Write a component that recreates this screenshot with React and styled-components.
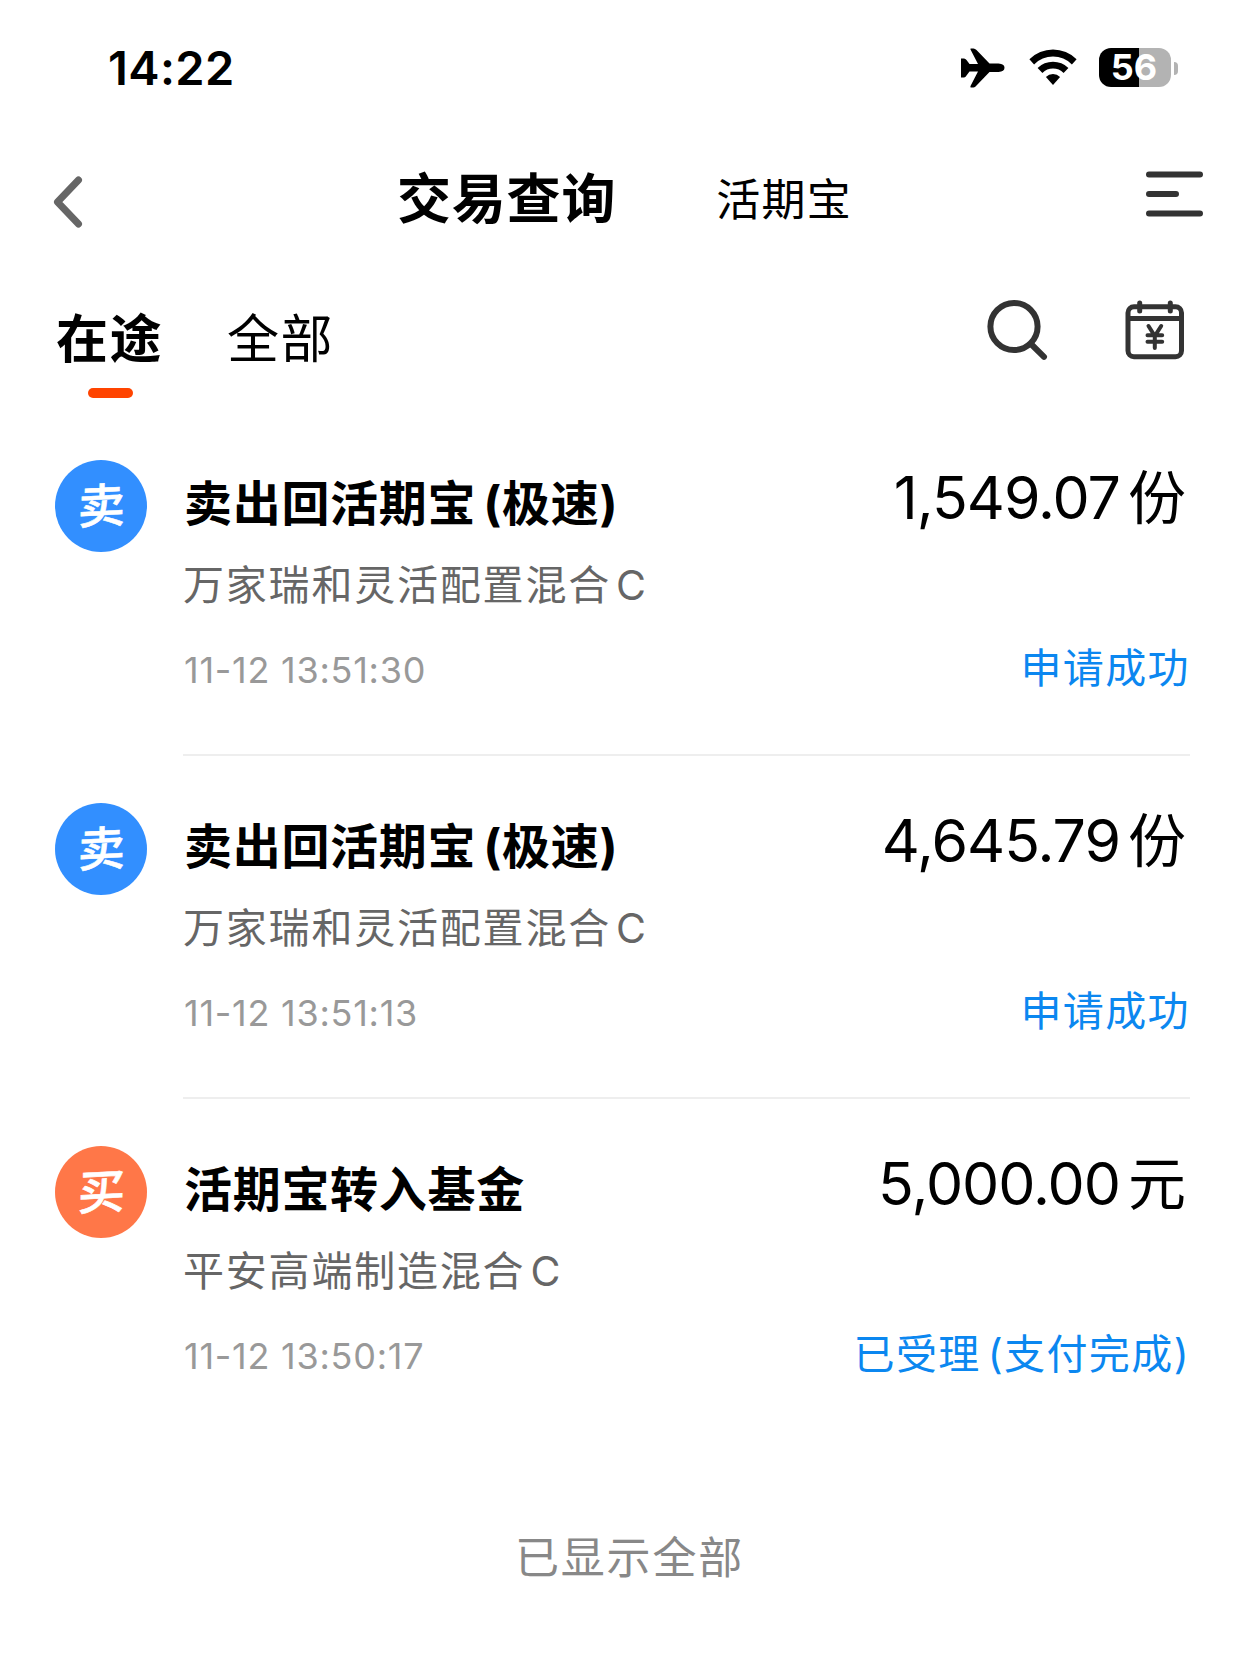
import styled, { createGlobalStyle } from "styled-components";

const GlobalStyle = createGlobalStyle`
  * {
    box-sizing: border-box;
  }
  body {
    margin: 0;
    background: #fff;
    color: #000;
    font-family: Inter, "Noto Sans CJK SC", sans-serif;
  }
`;

const Page = styled.div`
  width: 1242px;
  height: 1658px;
  background: #fff;
  overflow: hidden;
  white-space: nowrap;
`;

const StatusBar = styled.div`
  height: 136px;
  padding: 0 64px 0 108px;
  display: flex;
  align-items: center;
  justify-content: space-between;
`;

const Clock = styled.span`
  font-size: 47px;
  font-weight: 600;
  letter-spacing: 0.4px;
  line-height: 60px;
`;

const StatusIcons = styled.div`
  display: flex;
  align-items: center;
`;

const WifiIcon = styled.svg`
  margin: -2px 0 0 24px;
`;

const Battery = styled.div`
  width: 72px;
  height: 39px;
  margin: -1px 0 0 22px;
  padding-right: 2px;
  border-radius: 12px;
  background: linear-gradient(to right, #000 40px, #b3b3b3 40px);
  color: #fff;
  font-size: 36px;
  font-weight: 700;
  line-height: 39px;
  text-align: center;
`;

const BatteryTip = styled.div`
  width: 4px;
  height: 13px;
  margin-left: 3px;
  border-radius: 0 4px 4px 0;
  background: #b3b3b3;
`;

const Header = styled.header`
  height: 123px;
  padding: 0 38px 0 53px;
  display: flex;
  align-items: center;
`;

const BackIcon = styled.svg`
  margin-top: 9px;
`;

const Title = styled.h1`
  margin: 4px 0 0 314px;
  font-size: 54px;
  font-weight: 700;
  letter-spacing: 0.8px;
  line-height: 70px;
`;

const SubTitle = styled.span`
  margin: 4px 0 0 100px;
  font-size: 44px;
  letter-spacing: 1.3px;
  line-height: 70px;
`;

const MenuIcon = styled.svg`
  margin: -8px 0 0 auto;
`;

const Toolbar = styled.div`
  height: 154px;
  padding: 0 57px 0 56px;
  display: flex;
  align-items: flex-start;
`;

const Tab = styled.div`
  width: 107px;
  margin-right: 64px;
  padding-top: 46px;
  display: flex;
  flex-direction: column;
  font-size: 52px;
  font-weight: ${(p) => (p.$active ? 700 : 400)};
  letter-spacing: 1.4px;
  line-height: 70px;
  &::after {
    content: "";
    width: 45px;
    height: 10px;
    margin: 13px 0 0 32px;
    border-radius: 5px;
    background: ${(p) => (p.$active ? "#ff4400" : "transparent")};
  }
`;

const Tools = styled.div`
  margin: 39px 0 0 auto;
  display: flex;
  gap: 77px;
`;

const Row = styled.div`
  height: 343px;
  padding: 0 52px 0 55px;
  display: flex;
`;

const Badge = styled.div`
  width: 92px;
  height: 92px;
  margin: 47px 36px 0 0;
  border-radius: 50%;
  background: ${(p) => (p.$buy ? "#ff7748" : "#328fff")};
  color: #fff;
  font-size: 47px;
  font-weight: 500;
  line-height: 92px;
  text-align: center;
`;

const Glyph = styled.span`
  display: inline-block;
  transform: rotate(-3deg) skewX(-4deg);
  -webkit-text-stroke: 0.6px #fff;
`;

const Content = styled.div`
  flex: 1;
  display: flex;
  justify-content: space-between;
  border-bottom: 2px solid ${(p) => (p.$last ? "transparent" : "#eeeeee")};
`;

const Left = styled.div`
  padding-top: 61px;
`;

const Right = styled.div`
  padding-top: 50px;
  text-align: right;
`;

const Name = styled.div`
  padding-left: 1px;
  font-size: 48px;
  font-weight: 700;
  letter-spacing: 0.7px;
  line-height: 60px;
`;

const Fund = styled.div`
  margin-top: 21px;
  color: #666;
  font-size: 41px;
  letter-spacing: 1.8px;
  line-height: 60px;
`;

const Time = styled.div`
  margin-top: 30px;
  padding-left: 1px;
  color: #999;
  font-size: 36px;
  letter-spacing: 0.75px;
  line-height: 50px;
`;

const Amount = styled.div`
  padding-right: 5px;
  font-size: 59px;
  letter-spacing: -1px;
  line-height: 70px;
`;

const Unit = styled.span`
  margin-left: 8px;
  font-size: 58px;
`;

const Status = styled.div`
  margin-top: 105px;
  color: #0b87f0;
  font-size: 41px;
  letter-spacing: 1.4px;
  line-height: 60px;
`;

const Gap = styled.span`
  margin-left: ${(p) => p.$size || 7}px;
`;

const Footer = styled.div`
  padding: 81px 0 0 17px;
  color: #888;
  font-size: 44px;
  letter-spacing: 1.8px;
  line-height: 70px;
  text-align: center;
`;

const records = [
  { type: "卖", name: "卖出回活期宝", note: "(极速)", fund: "万家瑞和灵活配置混合", time: "11-12 13:51:30", amount: "1,549.07", unit: "份", status: "申请成功" },
  { type: "卖", name: "卖出回活期宝", note: "(极速)", fund: "万家瑞和灵活配置混合", time: "11-12 13:51:13", amount: "4,645.79", unit: "份", status: "申请成功" },
  { type: "买", name: "活期宝转入基金", fund: "平安高端制造混合", time: "11-12 13:50:17", amount: "5,000.00", unit: "元", status: "已受理", statusNote: "(支付完成)" },
];

const Airplane = () => (
  <svg width="44" height="40" viewBox="0 0 44 40">
    <path d="M0 10.500H3Q4.500 10.500 5.500 12L8.500 16H17L9.500 1.500Q9 .5 10 .5H12.500Q14 .5 15.500 2L28.500 15.500H37.500Q43.500 16 43.500 19.700T37.500 24H28.500L15.500 37.500Q14 39.500 12.500 39.500H10Q9 39.500 9.500 38L17 23.500H8.500L5.500 27.500Q4.500 29.500 3 29.500H0Z" />
  </svg>
);

const Wifi = () => (
  <WifiIcon width="48" height="37" viewBox="0 0 48 37">
    <path d="M.4 10.200a33.400 33.400 0 0 1 47.200 0l-4.700 5.200a26.700 26.700 0 0 0-37.800 0z" />
    <path d="M8.600 19a21.800 21.800 0 0 1 30.800 0l-4.800 5a15 15 0 0 0-21.200 0z" />
    <path d="M16.900 28a10 10 0 0 1 14.200 0L24 36z" />
  </WifiIcon>
);

const Search = () => (
  <svg width="62" height="62" viewBox="0 0 62 62" fill="none" stroke="#333" strokeWidth="6">
    <circle cx="28" cy="28.500" r="23.600" />
    <path d="M45 46L58 58.800" strokeLinecap="round" />
  </svg>
);

const Calendar = () => (
  <svg width="60" height="62" viewBox="0 0 60 62" fill="none" stroke="#333" strokeWidth="5" strokeLinecap="round">
    <rect x="3" y="8.700" width="53.500" height="50" rx="6" />
    <path d="M3 20.500H57" strokeLinecap="butt" />
    <path d="M14.700 5V13M45.300 5V13" />
    <path d="M23.500 28L29.800 38L36.200 28M29.800 38V50M22.500 37.300H37.200M22.500 43.700H37.200" strokeWidth="4" />
  </svg>
);

const App = () => {
  return (
    <Page>
      <GlobalStyle />
      <StatusBar>
        <Clock>14:22</Clock>
        <StatusIcons>
          <Airplane />
          <Wifi />
          <Battery>56</Battery>
          <BatteryTip />
        </StatusIcons>
      </StatusBar>
      <Header>
        <BackIcon width="30" height="52" viewBox="0 0 30 52" fill="none" stroke="#666" strokeWidth="7" strokeLinecap="round" strokeLinejoin="round">
          <path d="M25.500 4L4.500 26L25.500 48" />
        </BackIcon>
        <Title>交易查询</Title>
        <SubTitle>活期宝</SubTitle>
        <MenuIcon width="58" height="46" viewBox="0 0 58 46" stroke="#333" strokeWidth="6" strokeLinecap="round">
          <path d="M3 3.500H54M3 23H30M3 42.500H54" />
        </MenuIcon>
      </Header>
      <Toolbar>
        <Tab $active>在途</Tab>
        <Tab>全部</Tab>
        <Tools>
          <Search />
          <Calendar />
        </Tools>
      </Toolbar>
      {records.map((item, index) => (
        <Row key={item.time}>
          <Badge $buy={item.type === "买"}>
            <Glyph>{item.type}</Glyph>
          </Badge>
          <Content $last={index === records.length - 1}>
            <Left>
              <Name>
                {item.name}
                {item.note && <Gap>{item.note}</Gap>}
              </Name>
              <Fund>
                {item.fund}
                <Gap $size={5}>C</Gap>
              </Fund>
              <Time>{item.time}</Time>
            </Left>
            <Right>
              <Amount>
                {item.amount}
                <Unit>{item.unit}</Unit>
              </Amount>
              <Status>
                {item.status}
                {item.statusNote && <Gap>{item.statusNote}</Gap>}
              </Status>
            </Right>
          </Content>
        </Row>
      ))}
      <Footer>已显示全部</Footer>
    </Page>
  );
};

export default App;
